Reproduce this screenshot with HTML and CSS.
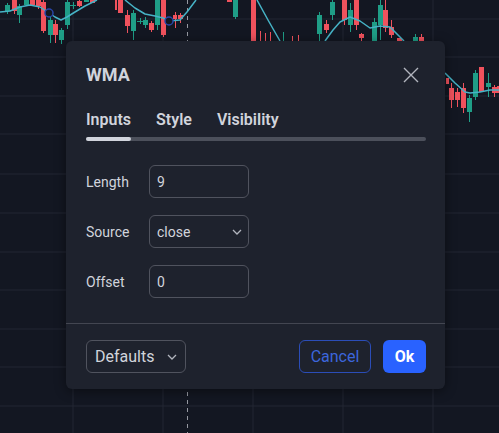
FILE: index.html
```html
<!DOCTYPE html>
<html lang="en">
<head>
    <meta charset="UTF-8">
    <meta name="viewport" content="width=device-width, initial-scale=1.0">
    <title>WMA settings</title>
    <link rel="stylesheet" href="styles.css">
</head>
<body>
    <svg class="chart" width="499" height="433" viewBox="0 0 499 433">
        <g class="grid">
            <line x1="73" y1="0" x2="73" y2="433"/>
            <line x1="163" y1="0" x2="163" y2="433"/>
            <line x1="253" y1="0" x2="253" y2="433"/>
            <line x1="343" y1="0" x2="343" y2="433"/>
            <line x1="433" y1="0" x2="433" y2="433"/>
            <line x1="0" y1="19" x2="499" y2="19"/>
            <line x1="0" y1="57" x2="499" y2="57"/>
            <line x1="0" y1="96" x2="499" y2="96"/>
            <line x1="0" y1="134" x2="499" y2="134"/>
            <line x1="0" y1="174" x2="499" y2="174"/>
            <line x1="0" y1="213" x2="499" y2="213"/>
            <line x1="0" y1="252" x2="499" y2="252"/>
            <line x1="0" y1="290" x2="499" y2="290"/>
            <line x1="0" y1="329" x2="499" y2="329"/>
            <line x1="0" y1="367" x2="499" y2="367"/>
            <line x1="0" y1="406" x2="499" y2="406"/>
        </g>

        <line class="crosshair" x1="187.5" y1="0" x2="187.5" y2="433"/>

        <!-- candles: wick first, body on top -->
        <g class="up">
            <rect x="7" y="3" width="1" height="11"/><rect x="5" y="5" width="5" height="6"/>
            <rect x="19" y="4" width="1" height="19"/><rect x="17" y="6" width="5" height="9"/>
            <rect x="24" y="0" width="5" height="5"/>
            <rect x="50" y="17" width="1" height="26"/><rect x="48" y="20" width="5" height="15"/>
            <rect x="61" y="28" width="1" height="16"/><rect x="59" y="30" width="5" height="10"/>
            <rect x="67" y="0" width="1" height="29"/><rect x="65" y="2" width="5" height="23"/>
            <rect x="73" y="2" width="1" height="7"/><rect x="70" y="5" width="6" height="1"/>
            <rect x="84" y="0" width="5" height="2"/>
            <rect x="133" y="10" width="1" height="30"/><rect x="131" y="13" width="5" height="18"/>
            <rect x="140" y="18" width="1" height="6"/><rect x="137" y="21" width="6" height="1"/>
            <rect x="145" y="17" width="1" height="11"/><rect x="143" y="20" width="5" height="5"/>
            <rect x="157" y="0" width="1" height="30"/><rect x="155" y="0" width="5" height="25"/>
            <rect x="235" y="0" width="1" height="19"/><rect x="233" y="0" width="5" height="17"/>
            <rect x="283" y="32" width="1" height="9"/>
            <rect x="319" y="12" width="1" height="29"/><rect x="317" y="15" width="5" height="19"/>
            <rect x="332" y="0" width="1" height="20"/><rect x="330" y="2" width="5" height="13"/>
            <rect x="350" y="3" width="1" height="29"/><rect x="348" y="10" width="5" height="15"/>
            <rect x="374" y="18" width="1" height="23"/><rect x="372" y="22" width="5" height="19"/>
            <rect x="380" y="0" width="1" height="40"/><rect x="378" y="5" width="5" height="20"/>
            <rect x="415" y="34" width="1" height="7"/><rect x="413" y="37" width="5" height="4"/>
            <rect x="469" y="95" width="1" height="27"/><rect x="467" y="98" width="5" height="14"/>
            <rect x="475" y="70" width="1" height="30"/><rect x="473" y="73" width="5" height="24"/>
            <rect x="488" y="73" width="1" height="24"/><rect x="486" y="83" width="5" height="4"/>
        </g>
        <g class="down">
            <rect x="12" y="0" width="5" height="11"/><rect x="14" y="0" width="1" height="14"/>
            <rect x="30" y="0" width="5" height="5"/>
            <rect x="38" y="0" width="1" height="9"/><rect x="36" y="0" width="5" height="6"/>
            <rect x="43" y="0" width="1" height="33"/><rect x="41" y="2" width="5" height="29"/>
            <rect x="55" y="20" width="1" height="23"/><rect x="53" y="24" width="5" height="11"/>
            <rect x="79" y="0" width="1" height="7"/><rect x="77" y="1" width="5" height="5"/>
            <rect x="90" y="0" width="5" height="3"/>
            <rect x="115" y="0" width="2" height="10"/>
            <rect x="118" y="0" width="5" height="13"/>
            <rect x="127" y="10" width="1" height="23"/><rect x="125" y="15" width="5" height="11"/>
            <rect x="151" y="21" width="1" height="11"/><rect x="149" y="23" width="5" height="7"/>
            <rect x="163" y="0" width="1" height="37"/><rect x="161" y="0" width="5" height="35"/>
            <rect x="175" y="12" width="1" height="16"/><rect x="173" y="15" width="4" height="4"/>
            <rect x="180" y="13" width="1" height="10"/><rect x="178" y="15" width="5" height="4"/>
            <rect x="227" y="0" width="5" height="2"/>
            <rect x="251" y="0" width="5" height="41"/>
            <rect x="260" y="31" width="1" height="10"/>
            <rect x="265" y="33" width="1" height="8"/>
            <rect x="270" y="32" width="1" height="9"/>
            <rect x="292" y="36" width="1" height="5"/>
            <rect x="298" y="35" width="1" height="6"/>
            <rect x="326" y="20" width="1" height="13"/><rect x="324" y="24" width="5" height="6"/>
            <rect x="344" y="0" width="1" height="25"/><rect x="342" y="0" width="5" height="20"/>
            <rect x="356" y="0" width="1" height="30"/><rect x="354" y="0" width="5" height="25"/>
            <rect x="361" y="33" width="1" height="8"/><rect x="359" y="34" width="5" height="4"/>
            <rect x="385" y="0" width="1" height="32"/><rect x="383" y="10" width="5" height="18"/>
            <rect x="391" y="20" width="1" height="18"/><rect x="389" y="27" width="5" height="8"/>
            <rect x="397" y="38" width="5" height="3"/>
            <rect x="421" y="34" width="1" height="7"/><rect x="419" y="37" width="5" height="4"/>
            <rect x="446" y="78" width="3" height="6"/>
            <rect x="451" y="83" width="1" height="25"/><rect x="449" y="88" width="5" height="12"/>
            <rect x="457" y="88" width="1" height="19"/><rect x="455" y="92" width="5" height="8"/>
            <rect x="463" y="83" width="1" height="30"/><rect x="461" y="88" width="5" height="20"/>
            <rect x="479" y="67" width="5" height="25"/>
            <rect x="494" y="85" width="1" height="12"/><rect x="492" y="87" width="5" height="6"/>
            <rect x="497" y="86" width="3" height="7"/>
        </g>

        <g class="wma">
            <polyline points="0,12 10,11 20,7 30,5 40,7 49,13 55,17 61,20 67,17 75,12 85,6 97,0"/>
            <polyline points="125,0 135,8 145,14 155,16 163,18 169,21 180,20 187,12 196,0"/>
            <polyline points="257,0 268,20 280,41"/>
            <polyline points="325,41 333,30 340,22 350,17 360,21 370,28 380,26 390,27 400,37 404,41"/>
            <polyline points="445,73 455,83 465,92 470,93 480,92 490,90 499,90"/>
        </g>
        <circle class="marker" cx="49" cy="13" r="4"/>
        <circle class="marker" cx="169" cy="21" r="4"/>
    </svg>

    <div class="dialog">
        <div class="dialog-header">
            <div class="title-row">
                <span class="title">WMA</span>
                <button class="close" aria-label="Close">
                    <svg width="16" height="16" viewBox="0 0 16 16">
                        <path d="M1 1 L15 15 M15 1 L1 15"/>
                    </svg>
                </button>
            </div>
            <div class="tabs">
                <span class="tab active">Inputs</span>
                <span class="tab">Style</span>
                <span class="tab">Visibility</span>
            </div>
            <div class="tab-track"><div class="tab-thumb"></div></div>
        </div>

        <div class="dialog-body">
            <div class="field">
                <label>Length</label>
                <div class="input">9</div>
            </div>
            <div class="field">
                <label>Source</label>
                <div class="input select">
                    <span>close</span>
                    <svg class="chevron" width="10" height="6" viewBox="0 0 10 6"><path d="M1 1 L5 5 L9 1"/></svg>
                </div>
            </div>
            <div class="field">
                <label>Offset</label>
                <div class="input">0</div>
            </div>
        </div>

        <div class="dialog-footer">
            <button class="btn defaults">
                Defaults
                <svg class="chevron" width="10" height="6" viewBox="0 0 10 6"><path d="M1 1 L5 5 L9 1"/></svg>
            </button>
            <div class="actions">
                <button class="btn cancel">Cancel</button>
                <button class="btn ok">Ok</button>
            </div>
        </div>
    </div>
</body>
</html>
```

FILE: styles.css
```css
body {
    margin: 0;
    width: 499px;
    height: 433px;
    background: #131722;
    color: #d1d4dc;
    font-family: Roboto, "Noto Sans", sans-serif;
    position: relative;
    overflow: hidden;
}

.chart {
    position: absolute;
    left: 0;
    top: 0;
    display: block;
}

.grid line {
    stroke: #222632;
    stroke-width: 1;
}

.crosshair {
    stroke: #9598a1;
    stroke-width: 1;
    stroke-dasharray: 4 4;
}

.up rect {
    fill: #1f9e87;
}

.down rect {
    fill: #f0525d;
}

.wma polyline {
    fill: none;
    stroke: #46b3c6;
    stroke-width: 1.5;
    stroke-linejoin: round;
}

.marker {
    fill: #131722;
    stroke: #2846a8;
    stroke-width: 1.5;
}

/* settings dialog */
.dialog {
    position: absolute;
    left: 66px;
    top: 41px;
    width: 379px;
    height: 348px;
    box-sizing: border-box;
    background: #1e222d;
    border-radius: 6px;
    box-shadow: 0 2px 12px rgba(0,0,0,0.45);
    display: flex;
    flex-direction: column;
}

.dialog-header {
    padding: 22px 19px 0 20px;
}

.title-row {
    display: flex;
    justify-content: space-between;
    align-items: center;
    height: 24px;
}

.title {
    font-size: 18px;
    font-weight: 700;
    line-height: 24px;
}

.close {
    background: none;
    border: 0;
    padding: 0;
    margin-right: 7px;
    width: 16px;
    height: 16px;
    display: flex;
}

.close path {
    stroke: #b2b5be;
    stroke-width: 1.4;
    fill: none;
}

.tabs {
    display: flex;
    gap: 25px;
    margin-top: 23px;
}

.tab {
    font-size: 16px;
    font-weight: 600;
    line-height: 20px;
}

.tab-track {
    margin-top: 7px;
    height: 4px;
    border-radius: 2px;
    background: #4c505b;
}

.tab-thumb {
    width: 45px;
    height: 4px;
    border-radius: 2px;
    background: #d1d4dc;
}

.dialog-body {
    padding: 24px 20px 25px;
    display: flex;
    flex-direction: column;
    gap: 17px;
    border-bottom: 1px solid #434651;
}

.field {
    display: flex;
    align-items: center;
    height: 33px;
}

.field label {
    width: 63px;
    font-size: 14px;
}

.input {
    width: 100px;
    height: 33px;
    box-sizing: border-box;
    border: 1px solid #50535e;
    border-radius: 6px;
    padding: 0 7px;
    font-size: 14px;
    display: flex;
    align-items: center;
}

.select {
    justify-content: space-between;
    padding-right: 6px;
}

.chevron path {
    fill: none;
    stroke: #b2b5be;
    stroke-width: 1.3;
}

.dialog-footer {
    padding: 16px 19px 16px 20px;
    display: flex;
    justify-content: space-between;
}

.actions {
    display: flex;
    gap: 12px;
}

.btn {
    height: 33px;
    box-sizing: border-box;
    border-radius: 6px;
    font-family: Roboto, "Noto Sans", sans-serif;
    font-size: 16px;
    padding: 0 11px;
    display: flex;
    align-items: center;
    cursor: pointer;
}

.defaults {
    width: 100px;
    background: none;
    border: 1px solid #50535e;
    color: #d1d4dc;
    padding: 0 8px;
    justify-content: space-between;
}

.cancel {
    width: 72px;
    justify-content: center;
    background: none;
    border: 1px solid #2b4db8;
    color: #3c66dc;
}

.ok {
    width: 43px;
    justify-content: center;
    background: #2962ff;
    border: 0;
    color: #fff;
    font-weight: 700;
}
```
